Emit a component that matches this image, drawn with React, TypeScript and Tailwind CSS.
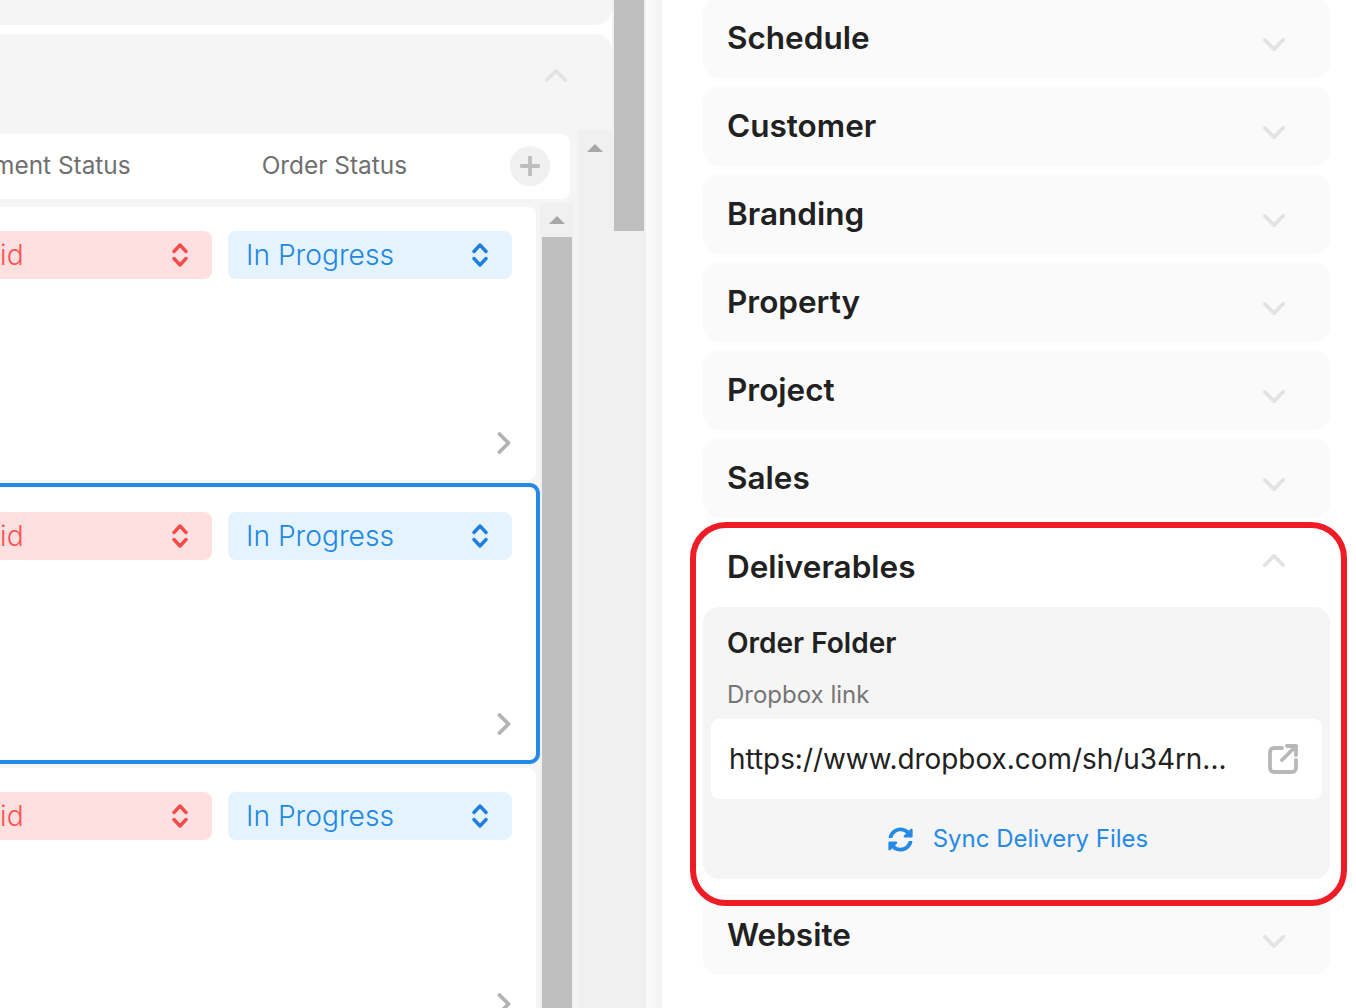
const FONT = "font-['Inter','Noto_Sans',sans-serif]"

function Chevron({ up, className }: { up?: boolean; className: string }) {
  return (
    <svg viewBox="0 0 24 14" className={className} fill="none" stroke="currentColor" strokeWidth="4" strokeLinecap="round" strokeLinejoin="round">
      <path d={up ? "M2 12 12 2l10 10" : "M2 2l10 10L22 2"} />
    </svg>
  )
}

function UpDown({ className }: { className: string }) {
  return (
    <svg viewBox="0 0 16 26" className={`w-4 h-[26px] shrink-0 ${className}`} fill="none" stroke="currentColor" strokeWidth="3.4" strokeLinecap="round" strokeLinejoin="round">
      <path d="M2 9.5 8 3l6 6.5M2 16.5 8 23l6-6.5" />
    </svg>
  )
}

function Arrow() {
  return <div className="w-0 h-0 border-x-[8px] border-x-transparent border-b-[8px] border-b-[#a8a8a8]" />
}

function Row({ active, height }: { active?: boolean; height: string }) {
  return (
    <div className={`relative shrink-0 bg-white rounded-r-lg pt-6 ${height}`}>
      {active && <div className="absolute -left-2 -top-[5px] -right-1 -bottom-1 border-4 border-[#2589e6] rounded-r-[10px]" />}
      <div className="flex justify-end gap-4 pr-6">
        <div className="flex items-center justify-between shrink-0 w-[300px] h-12 rounded-lg bg-[#ffe0e0] pl-[18px] pr-6">
          <span className="text-[28.2px] font-light text-[#ff5252]">Unpaid</span>
          <UpDown className="text-[#f44c4c]" />
        </div>
        <div className="flex items-center justify-between shrink-0 w-[284px] h-12 rounded-lg bg-[#e4f3fd] pl-[18px] pr-6">
          <span className="text-[28.2px] font-light text-[#1e88e5]">In Progress</span>
          <UpDown className="text-[#1e7fe0]" />
        </div>
      </div>
      <div className="flex justify-end pr-[25px] mt-[153px]">
        <svg viewBox="0 0 14 22" className="w-[14px] h-[22px] text-[#b3b3b3]" fill="none" stroke="currentColor" strokeWidth="3.8" strokeLinecap="round" strokeLinejoin="round">
          <path d="M2.5 2 11.5 11l-9 9" />
        </svg>
      </div>
    </div>
  )
}

function LeftPane() {
  return (
    <div className="flex w-[662px] shrink-0 h-full bg-white">
      <div className="flex flex-col w-[612px] shrink-0 gap-[9px]">
        <div className="h-[25px] shrink-0 bg-[#f5f5f5] rounded-br-2xl" />
        <div className="flex-1 flex flex-col bg-[#f5f5f5] rounded-tr-2xl min-h-0">
          <div className="h-[96px] shrink-0 flex justify-end pr-[45px] pt-[35px]">
            <Chevron up className="w-[22px] h-[13px] text-[#e3e3e3]" />
          </div>
          <div className="flex flex-1 min-h-0">
            <div className="w-[578px] shrink-0 flex flex-col pt-1 min-h-0">
              <div className="h-[65px] shrink-0 w-[570px] bg-white rounded-r-lg flex items-center justify-end pr-5 pb-px">
                <span className="shrink-0 whitespace-nowrap text-[24.4px] text-[#6f6f6f] -mt-[2px] mr-[131px]">Payment Status</span>
                <span className="shrink-0 whitespace-nowrap text-[24.4px] text-[#6f6f6f] -mt-[2px] mr-[103px]">Order Status</span>
                <div className="w-10 h-10 shrink-0 rounded-full bg-[#f0f0f0] flex items-center justify-center">
                  <svg viewBox="0 0 20 20" className="w-5 h-5 text-[#bdbdbd]" fill="none" stroke="currentColor" strokeWidth="3.8" strokeLinecap="round">
                    <path d="M10 1.5v17M1.5 10h17" />
                  </svg>
                </div>
              </div>
              <div className="flex-1 flex mt-1 min-h-0">
                <div className="w-[536px] shrink-0 flex flex-col gap-2 pt-1">
                  <Row height="h-[273px]" />
                  <Row active height="h-[272px]" />
                  <Row height="h-[280px]" />
                </div>
                <div className="w-[34px] ml-1 shrink-0 bg-[#f0f0f0] flex flex-col">
                  <div className="h-[34px] shrink-0 flex items-center justify-center"><Arrow /></div>
                  <div className="flex-1 mx-[2px] bg-[#bfbfbf]" />
                </div>
              </div>
            </div>
            <div className="w-[34px] shrink-0 bg-[#f0f0f0] pt-[14px] flex justify-center">
              <Arrow />
            </div>
          </div>
        </div>
      </div>
      <div className="w-[34px] shrink-0 bg-[#f0f0f0]">
        <div className="h-[231px] ml-[2px] w-[30px] bg-[#bfbfbf]" />
      </div>
      <div className="flex-1 bg-gradient-to-r from-[#fbfbfb] to-[#f3f3f3]" />
    </div>
  )
}

function Section({ title }: { title: string }) {
  return (
    <div className="h-[80px] shrink-0 rounded-2xl bg-[#fafafa] flex items-center justify-between pl-6 pr-[45px]">
      <h3 className="text-[31.5px] font-semibold text-[#212121]">{title}</h3>
      <Chevron className="w-[22px] h-[13px] mt-[13px] text-[#e3e3e3]" />
    </div>
  )
}

function RightPane() {
  return (
    <div className="flex-1 flex h-full pl-[41px] pr-[26px]">
      <div className="w-[627px] flex flex-col gap-2 -mt-[2px]">
        {["Schedule", "Customer", "Branding", "Property", "Project", "Sales"].map((t) => (
          <Section key={t} title={t} />
        ))}
        <div className="shrink-0 h-[361px] flex flex-col">
          <div className="h-[81px] shrink-0 flex items-center justify-between pl-6 pr-[45px]">
            <h3 className="text-[31.5px] font-semibold text-[#212121]">Deliverables</h3>
            <Chevron up className="w-[22px] h-[13px] -mt-[12px] text-[#e3e3e3]" />
          </div>
          <div className="h-[272px] shrink-0 rounded-2xl bg-[#f5f5f5] flex flex-col px-2">
            <h4 className="text-[28px] font-semibold text-[#212121] pl-4 mt-[15px]">Order Folder</h4>
            <p className="text-2xl text-[#757575] pl-4 mt-[15px]">Dropbox link</p>
            <div className="h-[80px] shrink-0 mt-2 rounded-lg bg-white flex items-center justify-between pl-[18px] pr-6">
              <span className="text-[27.9px] text-[#212121] pt-[2px]">https://www.dropbox.com/sh/u34rn...</span>
              <svg viewBox="0 0 30 30" className="w-[30px] h-[30px] text-[#b8b8b8]" fill="none" stroke="currentColor" strokeWidth="3.8" strokeLinecap="round" strokeLinejoin="round">
                <path d="M14 4H6a4 4 0 0 0-4 4v16a4 4 0 0 0 4 4h18a4 4 0 0 0 4-4v-8" />
                <path d="M14 16 28 2M19 2h9v9" />
              </svg>
            </div>
            <div className="flex items-center justify-center gap-5 mt-6 pl-[3px]">
              <svg viewBox="0 0 512 512" className="w-[25px] h-[25px] text-[#2589e6]" fill="currentColor">
                <path d="M370.7 133.3C339.5 104 298.9 88 255.8 88c-77.5.1-144.3 53.2-162.8 126.9-1.3 5.4-6.1 9.2-11.7 9.2H24.1c-7.5 0-13.2-6.8-11.8-14.2C33.9 94.9 134.8 8 256 8c66.4 0 126.8 26.1 171.3 68.7L463 41c15.1-15.1 41-4.4 41 17v134c0 13.3-10.7 24-24 24H346c-21.4 0-32.1-25.9-17-41l41.7-41.7zM32 296h134c21.4 0 32.1 25.9 17 41l-41.8 41.8c31.3 29.3 71.8 45.3 114.9 45.2 77.4-.1 144.3-53.1 162.8-126.8 1.3-5.4 6.1-9.2 11.7-9.2h57.3c7.5 0 13.2 6.8 11.8 14.2C478.1 417.1 377.2 504 256 504c-66.4 0-126.8-26.1-171.3-68.7L49 471c-15.1 15.1-41 4.4-41-17V320c0-13.3 10.7-24 24-24z" />
              </svg>
              <span className="text-2xl text-[#2589e6]">Sync Delivery Files</span>
            </div>
          </div>
        </div>
        <Section title="Website" />
      </div>
    </div>
  )
}

export default function App() {
  return (
    <div className={`relative flex w-[1356px] h-[1008px] overflow-hidden bg-white ${FONT}`}>
      <LeftPane />
      <RightPane />
      {/* red callout drawn over the deliverables block */}
      <div className="absolute left-[690px] top-[522px] w-[657px] h-[384px] border-[6px] border-[#ee1c25] rounded-[36px]" />
    </div>
  )
}
